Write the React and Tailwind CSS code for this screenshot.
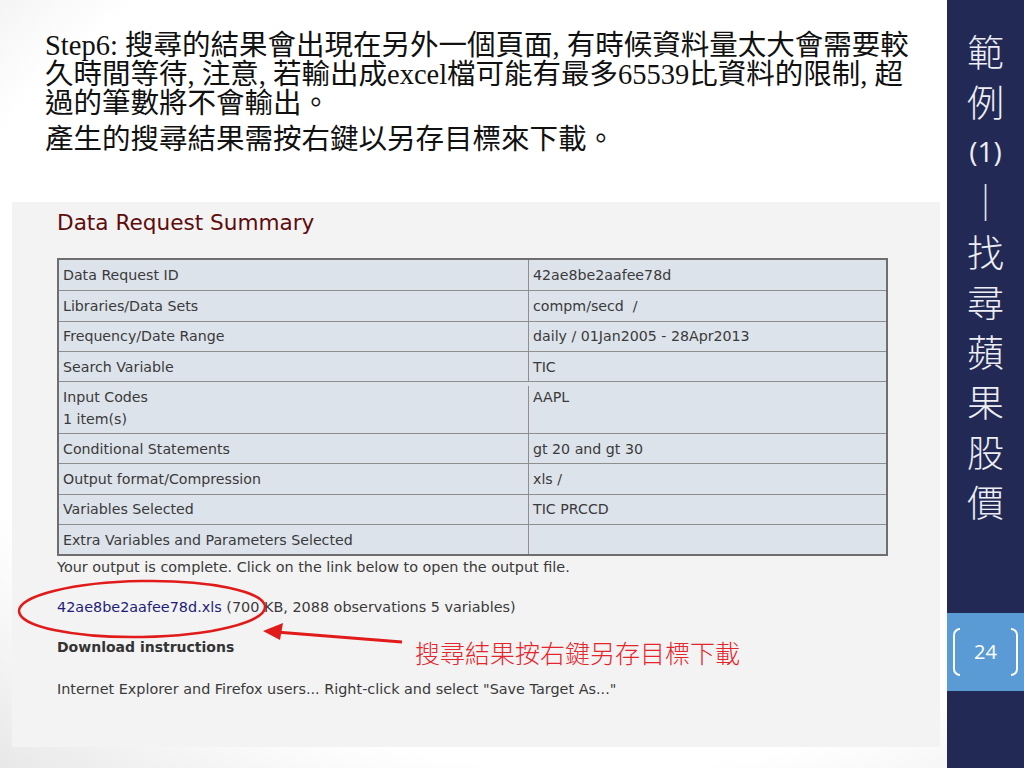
export default function App() {
  const rows = [
    { k: ["Data Request ID"], v: "42ae8be2aafee78d" },
    { k: ["Libraries/Data Sets"], v: "compm/secd\u00a0\u00a0/" },
    { k: ["Frequency/Date Range"], v: "daily / 01Jan2005 - 28Apr2013" },
    { k: ["Search Variable"], v: "TIC" },
    { k: ["Input Codes", "1 item(s)"], v: "AAPL", tall: true },
    { k: ["Conditional Statements"], v: "gt 20 and gt 30" },
    { k: ["Output format/Compression"], v: "xls /" },
    { k: ["Variables Selected"], v: "TIC PRCCD" },
    { k: ["Extra Variables and Parameters Selected"], v: "" },
  ];
  const side = ["範", "例", "(1)", "｜", "找", "尋", "蘋", "果", "股", "價"];
  const sans = "font-['DejaVu_Sans',sans-serif]";
  return (
    <div className="relative w-[1024px] h-[768px] overflow-hidden flex bg-[radial-gradient(ellipse_110%_100%_at_58%_42%,#ffffff_58%,#e6e6e6_80%,#cfcfcf_100%)]">
      <main className="w-[947px] h-[768px] flex flex-col">
        <div className="h-[202px] pl-[45px] pt-[31px] text-[28.5px] leading-[29px] text-[#111] font-['Liberation_Serif','Noto_Sans_CJK_TC',serif] whitespace-nowrap">
          <div>Step6: 搜尋的結果會出現在另外一個頁面, 有時候資料量太大會需要較</div>
          <div>久時間等待, 注意, 若輸出成excel檔可能有最多65539比資料的限制, 超</div>
          <div>過的筆數將不會輸出。</div>
          <div className="mt-[7px]">產生的搜尋結果需按右鍵以另存目標來下載。</div>
        </div>
        <section className={`ml-[12px] w-[928px] h-[545px] bg-[#f3f3f3] pl-[45px] pt-[7px] ${sans}`}>
          <h2 className="text-[21.6px] leading-[28px] text-[#5e0c0c]">Data Request Summary</h2>
          <div className="mt-[21px] w-[831px] border-2 border-[#6e6e6e] bg-[#dde3ea] text-[14.2px] text-[#3a3a3a]">
            {rows.map((r, i) => (
              <div
                key={i}
                className={`flex ${r.tall ? "h-[52px] items-start pt-[4px]" : "h-[30.3px] items-center"} ${i > 0 ? "border-t border-[#8e8e8e]" : ""}`}
              >
                <div className={`w-[470px] self-stretch border-r border-[#8e8e8e] px-[4px] flex flex-col ${r.tall ? "" : "justify-center"} leading-[22px]`}>
                  {r.k.map((t, j) => (
                    <div key={j}>{t}</div>
                  ))}
                </div>
                <div className={`flex-1 px-[4px] leading-[22px] self-stretch flex ${r.tall ? "" : "items-center"}`}>{r.v}</div>
              </div>
            ))}
          </div>
          <div className="text-[14.4px] leading-[20px] text-[#3a3a3a]">
            <p className="mt-[1px]">Your output is complete. Click on the link below to open the output file.</p>
            <p className="mt-[20px]">
              <span className="text-[#1e1e78]">42ae8be2aafee78d.xls</span> (700 KB, 2088 observations 5 variables)
            </p>
            <p className="mt-[20px] font-bold text-[#333] text-[14px]">Download instructions</p>
            <p className="mt-[22px]">Internet Explorer and Firefox users... Right-click and select "Save Target As..."</p>
          </div>
        </section>
      </main>
      <aside className="w-[77px] h-[768px] bg-[#232955] flex flex-col text-[#eceef4]">
        <div className="h-[613px] pt-[26px] flex flex-col items-center">
          {side.map((c, i) => (
            <div
              key={i}
              className={`h-[50px] leading-[50px] ${c === "(1)" ? "text-[28px] leading-[46px] font-['Open_Sans',sans-serif]" : "text-[37px] font-light font-['Noto_Sans_CJK_TC',sans-serif]"}`}
            >
              {c}
            </div>
          ))}
        </div>
        <div className="h-[78px] bg-[#5b9bd5] flex items-center justify-between px-[6px]">
          <div className="w-[7px] h-[48px] border-2 border-r-0 border-white rounded-l-[8px]" />
          <span className="text-[20px] text-white font-['Open_Sans',sans-serif]">24</span>
          <div className="w-[7px] h-[48px] border-2 border-l-0 border-white rounded-r-[8px]" />
        </div>
      </aside>
      <svg className="absolute left-0 top-0 pointer-events-none" width="1024" height="768" viewBox="0 0 1024 768">
        <ellipse cx="142" cy="609" rx="123" ry="28" fill="none" stroke="#e11a1a" strokeWidth="2.5" transform="rotate(-1 142 609)" />
        <line x1="402" y1="642" x2="276" y2="632" stroke="#e11a1a" strokeWidth="3" />
        <polygon points="263,631 283,623 280,640" fill="#e11a1a" />
      </svg>
      <div className="absolute left-[415px] top-[634px] text-[25px] leading-[36px] text-[#e4262c] font-['Noto_Sans_CJK_TC',sans-serif] font-light whitespace-nowrap">
        搜尋結果按右鍵另存目標下載
      </div>
    </div>
  );
}
